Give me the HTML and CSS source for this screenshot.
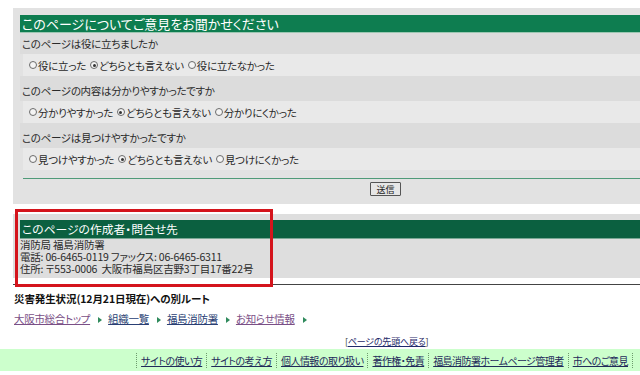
FILE: index.html
```html
<!DOCTYPE html>
<html lang="ja">

<head>
    <meta charset="UTF-8">
    <title>お知らせ情報 - 福島消防署</title>
    <link rel="stylesheet" href="styles.css">
</head>

<body>
    <form class="feedback">
        <h2 class="box-title">このページについてご意見をお聞かせください</h2>

        <div class="question first">このページは役に立ちましたか</div>
        <div class="answers">
            <label class="choice"><span class="radio"></span>役に立った</label>
            <label class="choice"><span class="radio checked"></span>どちらとも言えない</label>
            <label class="choice"><span class="radio"></span>役に立たなかった</label>
        </div>

        <div class="question">このページの内容は分かりやすかったですか</div>
        <div class="answers">
            <label class="choice"><span class="radio"></span>分かりやすかった</label>
            <label class="choice"><span class="radio checked"></span>どちらとも言えない</label>
            <label class="choice"><span class="radio"></span>分かりにくかった</label>
        </div>

        <div class="question">このページは見つけやすかったですか</div>
        <div class="answers">
            <label class="choice"><span class="radio"></span>見つけやすかった</label>
            <label class="choice"><span class="radio checked"></span>どちらとも言えない</label>
            <label class="choice"><span class="radio"></span>見つけにくかった</label>
        </div>

        <div class="send-row">
            <button type="button" class="send-btn">送信</button>
        </div>
    </form>

    <div class="contact">
        <h2 class="box-title dark">このページの作成者・問合せ先</h2>
        <p class="contact-text">
            消防局 福島消防署<br>
            電話: 06-6465-0119 ファックス: 06-6465-6311<br>
            住所: 〒553-0006&nbsp; 大阪市福島区吉野3丁目17番22号
        </p>
        <div class="highlight"></div>
    </div>
    <hr class="rule">

    <h3 class="route-title">災害発生状況(12月21日現在)への別ルート</h3>
    <ul class="crumbs">
        <li><a href="#" class="visited">大阪市総合トップ</a></li>
        <li><a href="#">組織一覧</a></li>
        <li><a href="#">福島消防署</a></li>
        <li><a href="#" class="visited">お知らせ情報</a></li>
    </ul>

    <p class="pagetop">[<a href="#">ページの先頭へ戻る</a>]</p>

    <ul class="footer-links">
        <li><a href="#">サイトの使い方</a></li>
        <li><a href="#">サイトの考え方</a></li>
        <li><a href="#">個人情報の取り扱い</a></li>
        <li><a href="#">著作権・免責</a></li>
        <li><a href="#">福島消防署ホームページ管理者</a></li>
        <li><a href="#">市へのご意見</a></li>
    </ul>
</body>

</html>
```

FILE: styles.css
```css
body {
    margin: 0;
    font-family: "Noto Sans CJK JP", "Noto Sans", sans-serif;
    font-feature-settings: "palt";
    font-size: 10.5px;
    letter-spacing: -0.3px;
    color: #2a2a2a;
    background-color: #ffffff;
    overflow: hidden;
}

/* feedback form */
.feedback {
    margin: 8px 0 0 13px;
    padding: 7px 0 0 7px;
    background-color: #e2e2e2;
}

.box-title {
    margin: 0;
    height: 17px;
    padding-left: 2px;
    font-size: 13px;
    font-weight: normal;
    letter-spacing: 0;
    line-height: 17px;
    color: #ffffff;
    background-color: #0e7d50;
    border-bottom: 1px solid #9cc7b2;
}

.box-title.dark {
    height: 18px;
    font-size: 11.8px;
    line-height: 18px;
    background-color: #0b6040;
    border-bottom: 1px solid #7aa895;
}

.question {
    height: 21px;
    padding: 2px 0 0 2px;
    box-sizing: border-box;
    line-height: 17px;
    background-color: #dcdcdc;
}

.question + .answers + .question {
    height: 25px;
    padding-top: 6px;
}

.answers {
    display: flex;
    gap: 4px;
    height: 22px;
    margin-left: 3px;
    padding-left: 6px;
    align-items: center;
    background-color: #e9e9e9;
}

.choice {
    display: flex;
    align-items: center;
}

.radio {
    width: 6px;
    height: 6px;
    margin-right: 1px;
    border: 1px solid #6b6b6b;
    border-radius: 50%;
    background-color: #f4f4f4;
    position: relative;
}

.radio.checked::after {
    content: "";
    position: absolute;
    left: 1.5px;
    top: 1.5px;
    width: 3px;
    height: 3px;
    border-radius: 50%;
    background-color: #333;
}

.send-row {
    display: flex;
    margin: 8px 0 0 3px;
    padding: 3px 0 8px 347px;
    border-top: 1px solid #4f9a78;
}

.send-btn {
    width: 31px;
    height: 14px;
    padding: 0;
    font-family: inherit;
    font-size: 9px;
    line-height: 11px;
    color: #222;
    background-color: #e6e6e6;
    border: 1px solid #555;
    border-radius: 1px;
}

/* contact box */
.contact {
    position: relative;
    margin: 10px 0 0 13px;
    padding: 6px 0 3px 7px;
    background-color: #dedede;
}

.contact-text {
    margin: 0;
    line-height: 12px;
    font-size: 10.5px;
    letter-spacing: -0.2px;
}

.highlight {
    position: absolute;
    left: 2px;
    top: -5px;
    width: 252px;
    height: 72px;
    border: 3px solid #d4141c;
    pointer-events: none;
}

.rule {
    margin: 6px 0 0 13px;
    height: 0;
    border: none;
    border-top: 1px solid #444;
}

.route-title {
    margin: 7px 0 0 14px;
    font-size: 10.5px;
    font-weight: bold;
    letter-spacing: -0.1px;
    line-height: 14px;
    color: #111;
}

.crumbs {
    display: flex;
    margin: 6px 0 0 14px;
    padding: 0;
    list-style: none;
    line-height: 14px;
}

.crumbs li {
    margin-right: 6px;
}

.crumbs li::after {
    content: "";
    display: inline-block;
    margin-left: 8px;
    border-left: 4px solid #2f8a5c;
    border-top: 3px solid transparent;
    border-bottom: 3px solid transparent;
}

.crumbs a {
    color: #2a3f74;
    text-decoration: underline;
}

.crumbs a.visited {
    color: #7a4f86;
}

.pagetop {
    margin: 10px 0 0 345px;
    font-size: 9px;
    letter-spacing: -0.2px;
    line-height: 12px;
    color: #333;
}

.pagetop a {
    color: #1f2a6a;
}

.footer-links {
    display: flex;
    justify-content: flex-end;
    margin: 1px 0 0 0;
    padding: 0 7px 0 0;
    height: 22px;
    align-items: center;
    list-style: none;
    font-size: 10px;
    letter-spacing: -0.55px;
    background-color: #ccffcc;
}

.footer-links li {
    padding: 0 4px;
    border-left: 1px dotted #6d9a6d;
    line-height: 15px;
}

.footer-links li:last-child {
    border-right: 1px dotted #6d9a6d;
}

.footer-links a {
    color: #1f2a5a;
}
```
